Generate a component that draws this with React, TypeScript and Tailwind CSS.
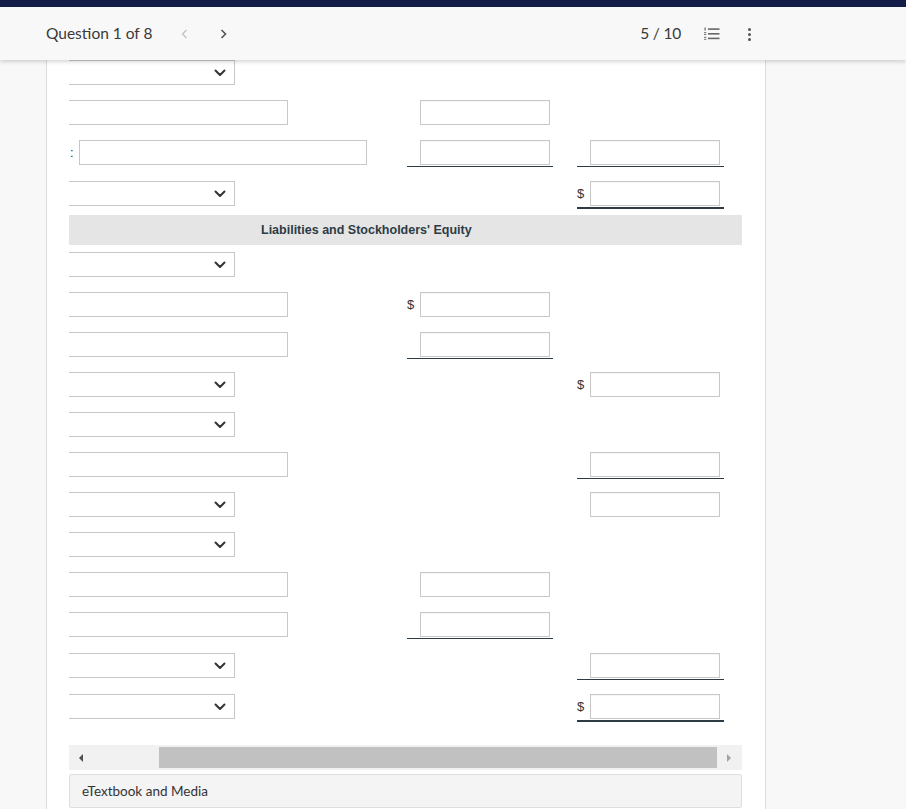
import React from "react";

type Cell = { dollar?: boolean; line?: "single" | "double" } | null;

interface Row {
  first: "select" | "input" | "colon";
  mid: Cell;
  right: Cell;
  h: string;
}

const Chevron = () => (
  <svg width="12" height="8" viewBox="0 0 12 8" fill="none">
    <polyline points="1.5,1.5 6,6 10.5,1.5" stroke="#333" strokeWidth="2" strokeLinecap="round" strokeLinejoin="round" />
  </svg>
);

const SelectBox = () => (
  <div className="w-[166px] h-[25px] border-y border-r border-[#c8c8c8] bg-white flex items-center justify-end pr-[8px]">
    <Chevron />
  </div>
);

const AmountCell = ({ cell, width }: { cell: Cell; width: string }) => {
  if (!cell) return <div className={width} />;
  const line =
    cell.line === "single"
      ? "border-b border-[#2d3b45] pb-[1px]"
      : cell.line === "double"
      ? "border-b-2 border-[#2d3b45] pb-[1px]"
      : "pb-[2px]";
  return (
    <div className={`${width} flex items-start ${line}`}>
      <span className="w-[13px] text-[13px] leading-[25px] text-[#333] font-['Liberation_Sans',sans-serif]">
        {cell.dollar ? "$" : ""}
      </span>
      <div className="w-[130px] h-[25px] border border-[#c8c8c8] bg-white shadow-[inset_0_1px_1px_rgba(0,0,0,0.04)]" />
    </div>
  );
};

const rows: Row[] = [
  { first: "select", mid: null, right: null, h: "h-[40px]" },
  { first: "input", mid: {}, right: null, h: "h-[40px]" },
  { first: "colon", mid: { line: "single" }, right: { line: "single" }, h: "h-[41px]" },
  { first: "select", mid: null, right: { dollar: true, line: "double" }, h: "h-[34px]" },
];

const rows2: Row[] = [
  { first: "select", mid: null, right: null, h: "h-[40px]" },
  { first: "input", mid: { dollar: true }, right: null, h: "h-[40px]" },
  { first: "input", mid: { line: "single" }, right: null, h: "h-[40px]" },
  { first: "select", mid: null, right: { dollar: true }, h: "h-[40px]" },
  { first: "select", mid: null, right: null, h: "h-[40px]" },
  { first: "input", mid: null, right: { line: "single" }, h: "h-[40px]" },
  { first: "select", mid: null, right: {}, h: "h-[40px]" },
  { first: "select", mid: null, right: null, h: "h-[40px]" },
  { first: "input", mid: {}, right: null, h: "h-[40px]" },
  { first: "input", mid: { line: "single" }, right: null, h: "h-[41px]" },
  { first: "select", mid: null, right: { line: "single" }, h: "h-[41px]" },
  { first: "select", mid: null, right: { dollar: true, line: "double" }, h: "h-[51px]" },
];

const FormRow = ({ row }: { row: Row }) => (
  <div className={`flex items-start ${row.h}`}>
    <div className="w-[338px] flex items-start">
      {row.first === "select" && <SelectBox />}
      {row.first === "input" && (
        <div className="w-[219px] h-[25px] border-y border-r border-[#c8c8c8] bg-white" />
      )}
      {row.first === "colon" && (
        <>
          <span className="w-[10px] pl-[1px] text-[13px] leading-[25px] text-[#333] font-['Liberation_Sans',sans-serif]">:</span>
          <div className="w-[288px] h-[25px] border border-[#c8c8c8] bg-white" />
        </>
      )}
    </div>
    <AmountCell cell={row.mid} width="w-[146px]" />
    <div className="w-[24px]" />
    <AmountCell cell={row.right} width="w-[147px]" />
  </div>
);

const ListIcon = () => (
  <svg width="16" height="14" viewBox="0 0 16 14" fill="#666">
    <rect x="0.5" y="0.5" width="1.2" height="3" />
    <rect x="0" y="5.2" width="2.4" height="0.9" />
    <rect x="0" y="7" width="2.4" height="0.9" />
    <rect x="0" y="9.8" width="2.4" height="0.9" />
    <rect x="0" y="11.8" width="2.4" height="0.9" />
    <rect x="4" y="1.3" width="11.5" height="1.6" />
    <rect x="4" y="6" width="11.5" height="1.6" />
    <rect x="4" y="10.6" width="11.5" height="1.6" />
  </svg>
);

const App = () => {
  return (
    <div className="w-[906px] h-[809px] overflow-hidden bg-[#f8f8f8] font-['Lato',sans-serif]">
      <div className="h-[7px] bg-[#131d47]" />
      <div className="relative z-10 h-[53px] bg-[#f8f8f8] shadow-[0_2px_4px_rgba(0,0,0,0.16)] flex items-center">
        <span className="ml-[46px] text-[15.5px] text-[#3a3a3a]">Question 1 of 8</span>
        <svg className="ml-[29px]" width="7" height="10" viewBox="0 0 7 10" fill="none">
          <polyline points="5.5,1 1.5,5 5.5,9" stroke="#c2c2c2" strokeWidth="1.3" />
        </svg>
        <svg className="ml-[32px]" width="7" height="10" viewBox="0 0 7 10" fill="none">
          <polyline points="1.5,1 5.5,5 1.5,9" stroke="#555" strokeWidth="1.6" />
        </svg>
        <div className="flex-1" />
        <span className="text-[15.5px] text-[#3a3a3a] tracking-[-0.2px]">5 / 10</span>
        <div className="ml-[23px] mt-[1px]">
          <ListIcon />
        </div>
        <div className="ml-[28px] mr-[155px] flex flex-col gap-[2px] mt-[1px]">
          <span className="w-[3px] h-[3px] rounded-full bg-[#555]" />
          <span className="w-[3px] h-[3px] rounded-full bg-[#555]" />
          <span className="w-[3px] h-[3px] rounded-full bg-[#555]" />
        </div>
      </div>

      <div className="flex h-[749px]">
        <div className="w-[46px]" />
        <div className="w-[720px] bg-white border-x border-[#dcdcdc] pl-[22px]">
          <div className="w-[673px] overflow-hidden">
            {rows.map((r, i) => (
              <FormRow key={i} row={r} />
            ))}
            <div className="h-[30px] bg-[#e5e5e5] flex items-center pl-[192px] text-[12.5px] font-bold text-[#2d3b45] font-['Liberation_Sans',sans-serif]">
              Liabilities and Stockholders' Equity
            </div>
            <div className="h-[7px]" />
            {rows2.map((r, i) => (
              <FormRow key={i} row={r} />
            ))}
            <div className="h-[25px] bg-[#f1f1f1] flex items-center">
              <svg className="ml-[10px]" width="4" height="8" viewBox="0 0 4 8">
                <polygon points="4,0 0,4 4,8" fill="#505050" />
              </svg>
              <div className="ml-[76px] w-[558px] h-[21px] bg-[#c1c1c1]" />
              <svg className="ml-[10px]" width="4" height="8" viewBox="0 0 4 8">
                <polygon points="0,0 4,4 0,8" fill="#a3a3a3" />
              </svg>
            </div>
            <div className="mt-[4px] h-[34px] bg-[#f4f4f4] border border-[#dedede] rounded-[2px] flex items-center pl-[12px] text-[13.5px] text-[#333]">
              eTextbook and Media
            </div>
          </div>
        </div>
        <div className="flex-1" />
      </div>
    </div>
  );
};

export default App;
